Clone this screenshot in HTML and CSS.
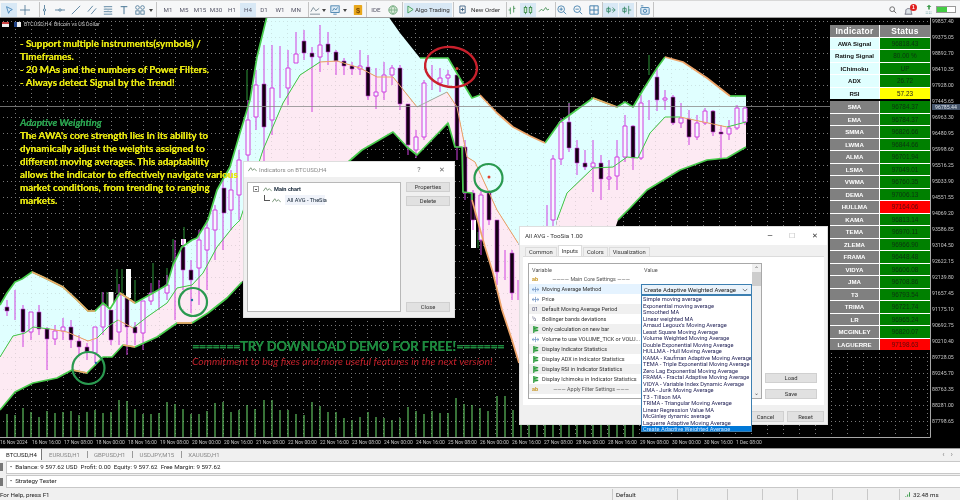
FILE: index.html
```html
<!DOCTYPE html>
<html lang="en">
<head>
<meta charset="utf-8">
<title>MetaTrader 5 - BTCUSD,H4</title>
<link rel="stylesheet" href="styles.css">
</head>
<body>
<svg class="defs" width="0" height="0" aria-hidden="true">
  <symbol id="flag" viewBox="0 0 8 8"><path d="M2 0V8M2 1L7 2L2 3M2 4L7 5L2 6" fill="none" stroke="#2a9a3a" stroke-width="1.3"/></symbol>
  <symbol id="arrows" viewBox="0 0 8 8"><path d="M0 4H8M4 1V7M2 2.5L0 4L2 5.5M6 2.5L8 4L6 5.5" fill="none" stroke="#7a9cc8" stroke-width=".9"/></symbol>
  <symbol id="wave" viewBox="0 0 10 8"><path d="M0 6L3 2L5 5L7 3L10 6" fill="none" stroke="#6b8a6b" stroke-width="1"/></symbol>
</svg>
<div class="screen">
  <header class="toolbar">
    <span class="tool active"><svg viewBox="0 0 12 12"><path d="M3 2L10 5.5L7 7L5.5 10Z" fill="none" stroke="#3f7fb5"/></svg></span>
    <span class="tool"><svg viewBox="0 0 12 12"><path d="M6 0V12M0 6H12" stroke="#4a7796" fill="none"/></svg></span>
    <span class="sep sep-a"></span>
    <span class="tool tool-9"><svg viewBox="0 0 8 12"><path d="M4 0V12" stroke="#4a7796"/><circle cx="4" cy="6" r="1.4" fill="#e8f0f5" stroke="#4a7796"/></svg></span>
    <span class="tool"><svg viewBox="0 0 12 12"><path d="M0 6H12" stroke="#4a7796"/><circle cx="6" cy="6" r="1.4" fill="#e8f0f5" stroke="#4a7796"/></svg></span>
    <span class="tool"><svg viewBox="0 0 12 12"><path d="M1 11L11 1" stroke="#4a7796"/></svg></span>
    <span class="tool"><svg viewBox="0 0 12 12"><path d="M1 8L7 1M5 11L11 4" stroke="#4a7796"/></svg></span>
    <span class="tool"><svg viewBox="0 0 12 12"><path d="M1 2H11M1 5H11M1 8H11M1 11H11" stroke="#4a7796"/><path d="M1 2L11 11" stroke="#9cb7c9" stroke-width=".6"/></svg></span>
    <span class="tool"><svg viewBox="0 0 12 12"><path d="M2 2H10M6 2V11" stroke="#4a7796" stroke-width="1.2"/></svg></span>
    <span class="tool"><svg viewBox="0 0 12 12"><circle cx="3" cy="3" r="2.2" fill="none" stroke="#4a7796"/><circle cx="9" cy="3" r="2.2" fill="none" stroke="#4a7796"/><rect x="1" y="7" width="4" height="4" fill="none" stroke="#4a7796"/><rect x="7" y="7" width="4" height="4" fill="none" stroke="#4a7796"/></svg></span>
    <span class="caret"></span>
    <span class="sep sep-b"></span>
    <span class="period">M1</span><span class="period">M5</span><span class="period">M15</span><span class="period">M30</span><span class="period">H1</span><span class="period active">H4</span><span class="period">D1</span><span class="period">W1</span><span class="period">MN</span>
    <span class="sep sep-c"></span>
    <span class="tool tool-12"><svg viewBox="0 0 12 12"><path d="M0 11H12M1 8L4 3L7 7L11 4" fill="none" stroke="#6d7f8a"/></svg></span>
    <span class="caret"></span>
    <span class="tool tool-14"><svg viewBox="0 0 12 12"><rect x="1" y="1" width="10" height="8" fill="#dceaf5" stroke="#3a7aa8"/><path d="M3 7L5 4L7 6L9 3" fill="none" stroke="#3a7aa8"/><path d="M4 11H8" stroke="#3a7aa8"/></svg></span>
    <span class="caret"></span>
    <span class="tool tool-14 gap-l2"><svg viewBox="0 0 12 12"><rect x="1" y="0" width="10" height="12" rx="1" fill="#e8a71c"/><text x="6" y="9" class="coin">$</text></svg></span>
    <span class="sep"></span>
    <span class="period period-ide">IDE</span>
    <span class="tool"><svg viewBox="0 0 12 12"><circle cx="6" cy="6" r="5" fill="#d8ecd8" stroke="#5c9a6a"/><path d="M1 6H11M6 1C3 4 3 8 6 11C9 8 9 4 6 1" fill="none" stroke="#5c9a6a" stroke-width=".7"/></svg></span>
    <span class="sep sep-d"></span>
    <span class="btn btn-algo active"><svg viewBox="0 0 8 8"><path d="M1 0L7 4L1 8Z" fill="#d9efd9" stroke="#3a9a5a"/></svg>Algo Trading</span>
    <span class="sep sep-d"></span>
    <span class="btn btn-new"><svg viewBox="0 0 8 10"><path d="M1 1H7V9H1Z" fill="none" stroke="#3a5f80"/><path d="M4 3V7M2 5H6" stroke="#3a5f80"/></svg>New Order</span>
    <span class="sep sep-e"></span>
    <span class="tool tool-10"><svg viewBox="0 0 10 12"><path d="M3 3V11M1 6H3M7 1V9M7 4H9" stroke="#3a8a4a" fill="none"/></svg></span>
    <span class="tool gap-l3 active"><svg viewBox="0 0 12 12"><path d="M3 1V11M9 1V11" stroke="#3a8a4a"/><rect x="1.5" y="3" width="3" height="6" fill="#d5ecd5" stroke="#3a8a4a"/><rect x="7.5" y="3" width="3" height="6" fill="#d5ecd5" stroke="#3a8a4a"/></svg></span>
    <span class="tool"><svg viewBox="0 0 12 12"><path d="M0 8L3 5L5 7L8 3L10 6L12 5" fill="none" stroke="#3a8a4a"/></svg></span>
    <span class="sep sep-h"></span>
    <span class="tool tool-12"><svg viewBox="0 0 12 12"><circle cx="5" cy="5" r="4" fill="none" stroke="#3a7aa8"/><path d="M8 8L11 11M3 5H7M5 3V7" stroke="#3a7aa8"/></svg></span>
    <span class="tool gap-l2"><svg viewBox="0 0 12 12"><circle cx="5" cy="5" r="4" fill="none" stroke="#3a7aa8"/><path d="M8 8L11 11M3 5H7" stroke="#3a7aa8"/></svg></span>
    <span class="tool"><svg viewBox="0 0 12 12"><path d="M1 1H11V11H1ZM6 1V11M1 6H11" fill="none" stroke="#3a7aa8" stroke-width="1.1"/></svg></span>
    <span class="sep sep-f"></span>
    <span class="tool tool-15 active"><svg viewBox="0 0 12 12"><path d="M3 2V10M1 4H5V8H1ZM8 3L11 6L8 9M7 6H11" fill="none" stroke="#3a8a6a"/></svg></span>
    <span class="tool tool-15 gap-l1 active"><svg viewBox="0 0 12 12"><path d="M3 2V10M1 4H5V8H1ZM8 1V11M8 6H11" fill="none" stroke="#3a8a6a"/></svg></span>
    <span class="sep sep-g"></span>
    <span class="tool"><svg viewBox="0 0 12 12"><rect x="1" y="3" width="10" height="8" rx="1" fill="#dceaf5" stroke="#3a7aa8"/><circle cx="6" cy="7" r="2" fill="none" stroke="#3a7aa8"/><path d="M1 1H4" stroke="#3a7aa8"/></svg></span>
    <span class="sep sep-i"></span>
    <div class="tray">
      <svg class="tray-search" viewBox="0 0 10 10"><circle cx="4" cy="4" r="3" fill="none" stroke="#555"/><path d="M6 6L9 9" stroke="#555"/></svg>
      <span class="bell"><svg viewBox="0 0 10 10"><path d="M1 8C2 7 2 5 2 4C2 1 8 1 8 4C8 5 8 7 9 8Z" fill="#dde3e8" stroke="#667"/></svg><b class="badge">1</b></span>
      <svg class="tray-signal" viewBox="0 0 10 12"><path d="M5 0L8 3H6V6H4V3H2Z" fill="#3c9a4a"/><path d="M1 9H9M1 11H9" stroke="#7aa" stroke-dasharray="1 1"/></svg>
      <span class="battery"><i class="battery-fill"></i></span>
    </div>
  </header>

  <main class="chart">
    <svg class="plot" viewBox="0 18 960 430" width="960" height="430" role="img" aria-label="BTCUSD H4 candlestick chart">
      <defs>
        <pattern id="grid" x="15" y="5" width="16" height="16" patternUnits="userSpaceOnUse">
          <path d="M0 .5H1M4 .5H5M8 .5H9M12 .5H13M.5 0V1M.5 4V5M.5 8V9M.5 12V13" stroke="#787878" stroke-width="1"/>
        </pattern>
      </defs>
      <rect class="bg" x="0" y="18" width="960" height="430"/>
      <rect x="0" y="18" width="930" height="419" fill="url(#grid)"/>
      <polygon class="band-up" points="0,305 7,293 15,282 22,279 32,272 43,277 63,287 77,300 88,311 95,311 103,303 110,309 120,293 135,303 153,293 167,285 173,265 182,247 192,240 197,238 208,220 217,190 230,167 240,133 250,100 257,57 267,16 388,16 400,33 420,58 448,58 458,75 472,98 480,95 497,113 513,127 530,136 545,143 560,122 593,98 617,107 625,102 633,107 643,90 657,68 665,57 683,62 707,78 730,96 746,96 746,122 727,127 680,117 665,117 650,133 638,158 627,157 613,167 593,168 567,193 557,220 550,260 535,280 518,243 497,210 475,162 467,157 457,107 447,92 417,107 393,77 377,77 360,68 337,61 320,62 300,75 283,103 263,150 240,220 233,227 217,247 203,273 192,285 177,288 167,303 147,317 133,328 118,320 110,325 97,338 88,341 67,332 50,329 33,327 25,333 13,336 0,357"/>
      <polygon class="band-down" points="0,357 13,336 25,333 33,327 50,329 67,332 88,341 97,338 110,325 118,320 133,328 147,317 167,303 177,288 192,285 203,273 217,247 233,227 240,220 263,150 283,103 300,75 320,62 337,61 360,68 377,77 393,77 417,107 447,92 457,107 467,157 475,162 497,210 518,243 535,280 550,260 557,220 567,193 593,168 613,167 627,157 638,158 650,133 665,117 680,117 727,127 746,122 746,147 727,158 707,160 680,170 647,190 630,208 618,220 590,300 530,390 519,363 512,340 502,310 493,273 485,247 472,200 472,193 463,192 462,147 455,147 448,123 417,155 407,147 393,132 362,150 347,163 300,200 270,240 242,282 227,298 208,313 192,323 177,323 157,337 135,347 123,345 112,357 103,357 87,373 72,370 57,378 33,383 15,392 0,410"/>
      <rect x="0" y="18" width="930" height="419" fill="url(#grid)" opacity=".2"/>

      <path class="spike" d="M102 292V310M107 292V305M117 269V293M122 269V295M135 280V303M153 263V293M167 268V285M173 239V265M184 227V239M247 70V100M472 220V248M478 232V248M649 55V75M569 102V120"/>
      <path class="white-bar" d="M111 292V310M128.500 269V298M183.500 239V245M473.500 220V248"/>

      <path class="wick" d="M7 300V316M15 290V320M23 305V347M31 312V340M39 305V335M47 327V370M55 325V345M63 318V340M71 320V348M79 335V355M87 343V360M95 327V363M103 292V335M111 310V345M119 284V345M127 298V355M135 322V345M143 301V350M151 283V305M159 280V310M167 275V300M175 240V320M183 239V290M191 260V313M199 230V305M207 220V290M215 205V260M223 180V250M231 170V230M239 150V220M248 100V170M256 70V130M264 45V165M272 45V135M280 46V98M288 50V105M296 32V63M304 30V60M312 47V112M320 25V72M328 32V65M336 50V75M344 58V75M352 62V75M360 50V75M368 55V100M376 68V109M384 62V100M392 65V85M400 65V110M408 104V155M416 130V158M424 80V140M432 65V90M440 68V92M448 70V85M457 75V160M465 140V200M473 190V230M481 190V255M489 190V225M497 220V285M505 250V280M512 250V300M518 280V300M547 205V227M553 155V230M561 118V165M569 103V152M577 140V175M585 150V170M593 140V192M601 155V200M609 160V190M617 140V190M625 115V162M633 125V170M641 95V160M649 100V120M657 68V111M665 90V110M673 95V125M681 103V128M689 110V145M697 115V140M705 108V125M713 110V136M721 125V158M729 120V140M737 105V130M745 107V125"/>
      <path class="body-w" d="M29 312h4v20h-4zM53 331h4v8h-4zM61 327h4v4h-4zM93 327h4v26h-4zM101 305h4v22h-4zM117 295h4v37h-4zM141 301h4v32h-4zM149 293h4v8h-4zM165 285h4v8h-4zM197 240h4v28h-4zM205 228h4v22h-4zM213 210h4v20h-4zM229 190h4v20h-4zM237 160h4v35h-4zM246 120h4v35h-4zM254 85h4v32h-4zM270 88h4v32h-4zM286 68h4v20h-4zM294 54h4v9h-4zM318 45h4v12h-4zM358 66h4v3h-4zM374 92h4v4h-4zM382 75h4v17h-4zM390 68h4v7h-4zM414 137h4v13h-4zM422 83h4v54h-4zM438 78h4v5h-4zM446 75h4v3h-4zM479 195h4v45h-4zM551 159h4v61h-4zM559 122h4v37h-4zM591 163h4v4h-4zM607 177h4v2h-4zM615 157h4v19h-4zM623 126h4v31h-4zM639 103h4v55h-4zM663 98h4v2h-4zM679 118h4v5h-4zM695 123h4v14h-4zM703 111h4v12h-4zM727 128h4v6h-4zM735 108h4v20h-4zM743 108h4v14h-4z"/>
      <path class="body-b" d="M5 307h4v4h-4zM21 309h4v23h-4zM37 312h4v17h-4zM45 329h4v10h-4zM69 327h4v13h-4zM77 341h4v6h-4zM85 347h4v5h-4zM109 310h4v30h-4zM125 298h4v29h-4zM133 327h4v6h-4zM181 247h4v23h-4zM189 270h4v10h-4zM222 188h4v25h-4zM262 84h4v43h-4zM302 41h4v12h-4zM310 53h4v4h-4zM326 44h4v8h-4zM334 52h4v9h-4zM342 61h4v5h-4zM350 66h4v3h-4zM366 67h4v29h-4zM398 68h4v36h-4zM406 104h4v41h-4zM455 75h4v72h-4zM463 147h4v46h-4zM471 193h4v27h-4zM487 193h4v27h-4zM495 220h4v52h-4zM510 253h4v40h-4zM567 122h4v26h-4zM575 148h4v15h-4zM583 163h4v4h-4zM599 163h4v16h-4zM631 126h4v32h-4zM655 77h4v23h-4zM671 97h4v26h-4zM687 119h4v18h-4zM711 111h4v21h-4zM719 132h4v2h-4z"/>

      <polyline class="edge green" points="0,305 7,293 15,282 22,279 32,272 43,277 63,287 77,300 88,311 95,311 103,303 110,309 120,293 135,303 153,293 167,285 173,265 182,247 192,240 197,238 208,220 217,190 230,167 240,133 250,100 257,57 267,16"/>
      <polyline class="edge green" points="420,58 448,58 458,75 472,98 480,95"/>
      <polyline class="edge green" points="545,143 560,122 593,98 617,107 625,102 633,107 643,90 657,68 665,57"/>
      <polyline class="edge green" points="730,96 746,96"/>
      <polyline class="edge orange" points="32,272 43,277 63,287 77,300 88,311 95,311"/>
      <polyline class="edge orange" points="120,293 135,303"/>
      <polyline class="edge orange" points="480,95 497,113 513,127 530,136 545,143"/>
      <polyline class="edge orange" points="593,98 617,107"/>
      <polyline class="edge orange" points="665,57 683,62 707,78 730,96"/>
      <polyline class="edge green" points="0,410 15,392 33,383 57,378 72,370 87,373 103,357 112,357 123,345 135,347 157,337 177,323 192,323 208,313 227,298 242,282"/>
      <polyline class="edge green" points="347,163 362,150 393,132 407,147 417,155 448,123 455,147 462,147 463,192 472,193 472,200"/>
      <polyline class="edge green" points="618,220 630,208 647,190 680,170 707,160 727,158 746,147"/>
      <polyline class="edge orange" points="472,200 485,247 493,273 502,310 512,340 519,363"/>
      <polyline class="edge orange" points="72,370 87,373"/>
      <polyline class="edge orange" points="123,345 135,347"/>
      <polyline class="edge orange" points="177,323 192,323"/>
      <polyline class="mid green" points="0,357 13,336 25,333 33,327 50,329"/>
      <polyline class="mid orange" points="50,329 67,332 88,341 97,338"/>
      <polyline class="mid green" points="97,338 110,325 118,320"/>
      <polyline class="mid orange" points="118,320 133,328"/>
      <polyline class="mid green" points="133,328 147,317 167,303 177,288 192,285 203,273 217,247 233,227 240,220 263,150 283,103 300,75 320,62"/>
      <polyline class="mid orange" points="320,62 337,61 360,68 377,77 393,77 417,107"/>
      <polyline class="mid muted" points="417,107 447,92"/>
      <polyline class="mid orange" points="447,92 457,107 467,157 475,162 497,210 518,243"/>
      <polyline class="mid green" points="557,220 567,193 593,168 613,167 627,157 638,158 650,133 665,117 680,117"/>
      <polyline class="mid orange" points="680,117 727,127"/>
      <polyline class="mid green" points="727,127 746,122"/>

      <path class="price-line" d="M0 106.500H930"/>
      <path class="volume" d="M7 414V437M15 415V437M23 408V437M31 412V437M39 417V437M47 411V437M55 413V437M63 412V437M71 411V437M79 415V437M87 412V437M95 410V437M103 413V437M111 412V437M119 400V437M127 401V437M135 409V437M143 414V437M151 414V437M159 413V437M167 402V437M175 404V437M183 409V437M191 414V437M199 414V437M207 411V437M215 403V437M223 402V437M231 412V437M239 410V437M247 405V437M255 409V437M264 400V437M272 400V437M280 410V437M288 410V437M296 414V437M304 415V437M312 402V437M320 406V437M328 412V437M336 412V437M344 418V437M352 420V437M360 417V437M368 412V437M376 417V437M384 418V437M392 420V437M400 418V437M408 407V437M416 411V437M424 414V437M432 411V437M440 413V437M448 413V437M456 398V437M464 404V437M472 405V437M480 408V437M488 411V437M497 396V437M505 396V437M513 410V437M521 420V437M529 420V437M537 420V437M545 420V437M553 420V437M561 420V437M569 420V437M577 420V437M585 420V437M593 420V437M601 420V437M609 420V437M617 420V437M625 420V437M633 420V437"/>
      <path class="frame" d="M0 437.500H930.500V18"/>

      <ellipse class="ring-red" cx="451" cy="67" rx="26" ry="20" transform="rotate(8 451 67)"/>
      <circle class="ring-green" cx="488.500" cy="178" r="14"/>
      <circle class="ring-green" cx="88.500" cy="368" r="16"/>
      <circle class="ring-green" cx="193" cy="302" r="14"/>
      <circle class="dot-red" cx="457" cy="68.500" r="1.500"/>
      <circle class="dot-red" cx="489" cy="177" r="1.500"/>
      <circle class="dot-blue" cx="96" cy="363" r="1.200"/>
      <circle class="dot-blue" cx="192" cy="300" r="1.200"/>
    </svg>

    <div class="chart-title">
      <span class="flag flag-a"></span><span class="flag flag-b"></span>
      <span>BTCUSD,H4: Bitcoin vs US Dollar</span>
    </div>

    <div class="promo">
      <p class="promo-line">- Support multiple instruments(symbols) /</p>
      <p class="promo-line">Timeframes.</p>
      <p class="promo-line">- 20 MAs and the numbers of Power Filters.</p>
      <p class="promo-line">- Always detect Signal by the Trend!</p>
      <p class="promo-head">Adaptive Weighting</p>
      <p class="promo-line">The AWA's core strength lies in its ability to</p>
      <p class="promo-line">dynamically adjust the weights assigned to</p>
      <p class="promo-line">different moving averages. This adaptability</p>
      <p class="promo-line">allows the indicator to effectively navigate various</p>
      <p class="promo-line">market conditions, from trending to ranging</p>
      <p class="promo-line">markets.</p>
    </div>

    <div class="cta">
      <p class="cta-main"><span class="eq">=======</span>TRY DOWNLOAD DEMO FOR FREE!<span class="eq">=======</span></p>
      <p class="cta-sub">Commitment to bug fixes and more useful features in the next version!</p>
    </div>

    <div class="stats">
      <div class="stats-grid">
        <div class="cell head">Indicator</div><div class="cell head">Status</div>
        <div class="cell light">AWA Signal</div><div class="cell ok">96818.43</div>
        <div class="cell light">Rating Signal</div><div class="cell ok">80.00 %</div>
        <div class="cell light">IChimoku</div><div class="cell ok">UP</div>
        <div class="cell light">ADX</div><div class="cell ok">26.72</div>
        <div class="cell light">RSI</div><div class="cell warn">57.23</div>
      </div>
      <div class="stats-grid">
        <div class="cell name">SMA</div><div class="cell ok">96784.37</div>
        <div class="cell name">EMA</div><div class="cell ok">96784.37</div>
        <div class="cell name">SMMA</div><div class="cell ok">96826.66</div>
        <div class="cell name">LWMA</div><div class="cell ok">96844.66</div>
        <div class="cell name">ALMA</div><div class="cell ok">96701.94</div>
        <div class="cell name">LSMA</div><div class="cell ok">97049.01</div>
        <div class="cell name">VWMA</div><div class="cell ok">96760.35</div>
        <div class="cell name">DEMA</div><div class="cell ok">97006.13</div>
        <div class="cell name">HULLMA</div><div class="cell bad">97164.06</div>
        <div class="cell name">KAMA</div><div class="cell ok">96813.14</div>
        <div class="cell name">TEMA</div><div class="cell ok">96970.11</div>
        <div class="cell name">ZLEMA</div><div class="cell ok">96966.90</div>
        <div class="cell name">FRAMA</div><div class="cell ok">96448.48</div>
        <div class="cell name">VIDYA</div><div class="cell ok">96606.08</div>
        <div class="cell name">JMA</div><div class="cell ok">96708.86</div>
        <div class="cell name">T3</div><div class="cell ok">96793.54</div>
        <div class="cell name">TRIMA</div><div class="cell ok">96721.74</div>
        <div class="cell name">LR</div><div class="cell ok">96965.24</div>
        <div class="cell name">MCGINLEY</div><div class="cell ok">96820.07</div>
        <div class="cell name">LAGUERRE</div><div class="cell bad">97198.63</div>
      </div>
    </div>

    <div class="price-axis">
      <span>99857.40</span><span>99375.05</span><span>98892.70</span><span>98410.35</span><span>97928.00</span><span>97445.65</span><span>96963.30</span><span>96480.95</span><span>95998.60</span><span>95516.25</span><span>95033.90</span><span>94551.55</span><span>94069.20</span><span>93586.85</span><span>93104.50</span><span>92622.15</span><span>92139.80</span><span>91657.45</span><span>91175.10</span><span>90692.75</span><span>90210.40</span><span>89728.05</span><span>89245.70</span><span>88763.35</span><span>88281.00</span><span>87798.65</span>
    </div>
    <div class="price-tag">96785.44</div>

    <div class="time-axis">
      <span>16 Nov 2024</span><span>16 Nov 16:00</span><span>17 Nov 08:00</span><span>18 Nov 00:00</span><span>18 Nov 16:00</span><span>19 Nov 08:00</span><span>20 Nov 00:00</span><span>20 Nov 16:00</span><span>21 Nov 08:00</span><span>22 Nov 00:00</span><span>22 Nov 16:00</span><span>23 Nov 08:00</span><span>24 Nov 00:00</span><span>24 Nov 16:00</span><span>25 Nov 08:00</span><span>26 Nov 00:00</span><span>26 Nov 16:00</span><span>27 Nov 08:00</span><span>28 Nov 00:00</span><span>28 Nov 16:00</span><span>29 Nov 08:00</span><span>30 Nov 00:00</span><span>30 Nov 16:00</span><span>1 Dec 08:00</span>
    </div>

    <section class="win win-list">
      <div class="win-title"><svg class="ico-10" viewBox="0 0 10 8"><use href="#wave"/></svg><span class="win-caption">Indicators on BTCUSD,H4</span><span class="win-ctl win-help">?</span><span class="win-ctl">✕</span></div>
      <div class="list-body">
        <div class="tree">
          <div class="tree-row"><span class="tree-box"></span><svg class="ico-10" viewBox="0 0 10 8"><use href="#wave"/></svg><b>Main chart</b></div>
          <div class="tree-row tree-child"><span class="tree-elbow"></span><svg class="ico-10" viewBox="0 0 10 8"><use href="#wave"/></svg><span class="tree-sel">All AVG - TheSia</span></div>
        </div>
        <div class="list-actions">
          <span class="push">Properties</span>
          <span class="push">Delete</span>
          <span class="push push-end">Close</span>
        </div>
      </div>
    </section>

    <section class="win win-props">
      <div class="win-title win-title-dark"><span class="win-caption">All AVG - TooSia 1.00</span><span class="win-ctl ctl-min">—</span><span class="win-ctl ctl-max">☐</span><span class="win-ctl ctl-close">✕</span></div>
      <div class="tabs"><span class="tab">Common</span><span class="tab tab-on">Inputs</span><span class="tab">Colors</span><span class="tab">Visualization</span></div>
      <div class="props-body">
        <div class="params">
          <div class="param-grid">
            <div class="p p-head">Variable</div><div class="p p-head">Value</div>
            <div class="p"><span class="ab">ab</span><span class="p-mid">———— Main Core Settings ———</span></div><div class="p"></div>
            <div class="p p-alt p-hot"><svg class="ico-7"><use href="#arrows"/></svg>Moving Average Method</div><div class="p p-alt"></div>
            <div class="p"><svg class="ico-7"><use href="#arrows"/></svg>Price</div><div class="p"></div>
            <div class="p p-alt"><span class="num">01</span>Default Moving Average Period</div><div class="p p-alt"></div>
            <div class="p"><span class="num">½</span>Bollinger bands deviations</div><div class="p"></div>
            <div class="p p-alt"><svg class="ico-7"><use href="#flag"/></svg>Only calculation on new bar</div><div class="p p-alt"></div>
            <div class="p"><svg class="ico-7"><use href="#arrows"/></svg>Volume to use VOLUME_TICK or VOLU...</div><div class="p"></div>
            <div class="p p-alt"><svg class="ico-7"><use href="#flag"/></svg>Display Indicator Statistics</div><div class="p p-alt"></div>
            <div class="p"><svg class="ico-7"><use href="#flag"/></svg>Display ADX in Indicator Statistics</div><div class="p"></div>
            <div class="p p-alt"><svg class="ico-7"><use href="#flag"/></svg>Display RSI in Indicator Statistics</div><div class="p p-alt"></div>
            <div class="p"><svg class="ico-7"><use href="#flag"/></svg>Display Ichimoku in Indicator Statistics</div><div class="p"></div>
            <div class="p p-alt"><span class="ab">ab</span><span class="p-mid">——— Apply Filter Settings ———</span></div><div class="p p-alt"></div>
          </div>
          <div class="vscroll"><span class="vs-up">⌃</span><i class="vs-thumb"></i><span class="vs-down">⌄</span></div>
        </div>
        <div class="side-actions"><span class="push">Load</span><span class="push">Save</span></div>
      </div>
      <div class="props-foot"><span class="push">Cancel</span><span class="push">Reset</span></div>

      <div class="combo">Create Adaptive Weighted Average<svg viewBox="0 0 8 5"><path d="M1 1L4 4L7 1" fill="none" stroke="#555"/></svg></div>
      <ul class="drop">
        <li>Simple moving average</li>
        <li>Exponential moving average</li>
        <li>Smoothed MA</li>
        <li>Linear weighted MA</li>
        <li>Arnaud Legoux's Moving Average</li>
        <li>Least Square Moving Average</li>
        <li>Volume Weighted Moving Average</li>
        <li>Double Exponential Moving Average</li>
        <li>HULLMA - Hull Moving Average</li>
        <li>KAMA - Kaufman Adaptive Moving Average</li>
        <li>TEMA - Triple Exponential Moving Average</li>
        <li>Zero Lag Exponential Moving Average</li>
        <li>FRAMA - Fractal Adaptive Moving Average</li>
        <li>VIDYA - Variable Index Dynamic Average</li>
        <li>JMA - Jurik Moving Average</li>
        <li>T3 - Tillson MA</li>
        <li>TRIMA - Triangular Moving Average</li>
        <li>Linear Regression Value MA</li>
        <li>McGinley dynamic average</li>
        <li>Laguerre Adaptive Moving Average</li>
        <li class="drop-on">Create Adaptive Weighted Average</li>
      </ul>
    </section>
  </main>

  <nav class="chart-tabs">
    <span class="ctab ctab-on">BTCUSD,H4</span>
    <span class="ctab">EURUSD,H1</span><span class="ctab ctab-bar">GBPUSD,H1</span><span class="ctab ctab-bar">USDJPY,M15</span><span class="ctab ctab-bar">XAUUSD,H1</span>
    <span class="arrows">‹&nbsp;&nbsp;&nbsp;›</span>
  </nav>
  <div class="panel"><span class="panel-grip"></span><div class="panel-box">•&nbsp;&nbsp;Balance: 9 597.62 USD&nbsp;&nbsp;Profit: 0.00&nbsp;&nbsp;Equity: 9 597.62&nbsp;&nbsp;Free Margin: 9 597.62</div></div>
  <div class="panel"><span class="panel-grip"></span><div class="panel-box">•&nbsp;&nbsp;Strategy Tester</div></div>
  <footer class="status">
    <span class="st st-help">For Help, press F1</span>
    <span class="st st-default">Default</span>
    <span class="st st-a"></span><span class="st st-b"></span><span class="st st-c"></span><span class="st st-c"></span><span class="st st-c"></span><span class="st st-d"></span>
    <span class="st st-ping"><svg viewBox="0 0 8 8"><path d="M1 7V6M3.500 7V4M6 7V1" stroke="#3c9a4a" stroke-width="1.300"/></svg>32.48 ms</span>
  </footer>
</div>
</body>
</html>
```

FILE: styles.css
```css
* { box-sizing: border-box; }
html, body { margin: 0; padding: 0; background: #000; }
p, ul { margin: 0; padding: 0; }
.defs { position: absolute; }
.screen {
  width: 960px; height: 500px; overflow: hidden;
  display: flex; flex-direction: column;
  font-family: "Roboto", "Open Sans", sans-serif;
  background: #f0f0f0;
  filter: blur(.3px);
}

/* toolbar */
.toolbar {
  height: 18px; flex: none; display: flex; align-items: center;
  padding-left: 1px; padding-top: 1px;
  background: #f6f7f8; border-top: 1px solid #d8d8d8; border-bottom: 1px solid #a0a0a0;
}
.tool { width: 16px; height: 14px; flex: none; display: flex; align-items: center; justify-content: center; }
.tool svg { width: 10px; height: 10px; overflow: visible; }
.tool.active, .period.active, .btn.active { background: #d8e8f5; }
.tool-9 { width: 9px; margin-right: 3px; }
.tool-10 { width: 10px; }
.tool-12 { width: 12px; }
.tool-14 { width: 14px; }
.tool-15 { width: 15px; }
.gap-l1 { margin-left: 1px; }
.gap-l2 { margin-left: 2px; }
.gap-l3 { margin-left: 3px; }
.caret { width: 7px; height: 14px; flex: none; position: relative; }
.caret::after { content: ""; position: absolute; left: 1px; top: 6px; border: 2px solid transparent; border-top: 3px solid #444; }
.sep { width: 1px; height: 15px; flex: none; background: #c4c4c4; margin: 0 1px; }
.sep-a { margin: 0 0 0 6px; }
.sep-b { margin: 0 3px 0 1px; }
.sep-c { margin: 0 0 0 4px; }
.sep-d { margin: 0 1px; }
.sep-e { margin: 0; }
.sep-f { margin: 0; }
.sep-g { margin: 0 0 0 2px; }
.sep-h { margin: 0 0 0 3px; }
.sep-i { margin: 0; }
.period { width: 16px; height: 14px; flex: none; display: flex; align-items: center; justify-content: center; font-size: 6.2px; color: #556; }
.period-ide { width: 14px; margin-left: 1px; margin-right: 2px; }
.coin { font: bold 9px "Liberation Sans", sans-serif; text-anchor: middle; fill: #7a4a00; }
.btn { height: 14px; flex: none; display: flex; align-items: center; gap: 1px; padding: 0 0 0 3px; font-size: 6.2px; color: #333; white-space: nowrap; }
.btn svg { width: 7px; height: 9px; flex: none; }
.btn-algo { width: 48px; }
.btn-new { width: 51px; gap: 5px; padding-left: 4px; }
.tray { margin-left: auto; display: flex; align-items: center; padding-right: 4px; height: 14px; }
.tray-search { width: 8px; height: 8px; margin-right: 7px; }
.bell { width: 14px; height: 12px; position: relative; margin-right: 7px; display: block; }
.bell svg { width: 9px; height: 9px; position: absolute; left: 0; top: 3px; }
.badge { position: absolute; left: 6px; top: 0; width: 7px; height: 7px; border-radius: 50%; background: #e02020; color: #fff; font: bold 5px/7px "Liberation Sans", sans-serif; text-align: center; }
.tray-signal { width: 8px; height: 11px; margin-right: 3px; }
.battery { width: 20px; height: 7px; border: 1px solid #999; background: #fff; display: block; }
.battery-fill { display: block; width: 10px; height: 100%; background: #44cc44; }

/* chart */
.chart { position: relative; height: 430px; flex: none; background: #000; overflow: hidden; }
.plot { display: block; }
.bg { fill: #000; }
.band-up { fill: #e0ffff; }
.band-down { fill: #fdeaf3; }
.wick { stroke: #d040e0; stroke-width: 1; fill: none; }
.body-w { fill: #f4f8ff; stroke: #d040e0; stroke-width: 1; }
.body-b { fill: #140012; stroke: #d040e0; stroke-width: .6; }
.spike { stroke: #2f9a3a; stroke-width: 1; fill: none; }
.white-bar { stroke: #fff; stroke-width: 5; fill: none; }
.edge { fill: none; stroke-width: 1.7; stroke-linejoin: round; }
.mid { fill: none; stroke-width: 1; }
.green { stroke: #48cc4c; }
.orange { stroke: #efa56a; }
.muted { stroke: #a9b5a9; }
.price-line { stroke: #8c8c8c; stroke-width: .8; }
.volume { stroke: #66d066; stroke-width: 1.1; fill: none; }
.frame { stroke: #a8a8a8; stroke-width: 1; fill: none; }
.ring-red { fill: none; stroke: #c9202c; stroke-width: 2.4; }
.ring-green { fill: none; stroke: #2a9a50; stroke-width: 2.2; }
.dot-red { fill: #e04030; }
.dot-blue { fill: #1a6f9f; }

.chart-title { position: absolute; left: 2px; top: 3px; display: flex; align-items: center; gap: 1px; font-size: 5.3px; line-height: 7px; color: #c4c4c4; }
.flag { width: 7px; height: 5px; display: block; margin-right: 4px; }
.flag-a { background: linear-gradient(#c44 40%, #eee 40%); }
.flag-b { background: linear-gradient(90deg, #248 50%, #eee 50%); margin-right: 2px; }

.promo { position: absolute; left: 20px; top: 18.5px; width: 225px; font: bold 9.8px/13px "Lato", "Open Sans", sans-serif; color: #e6e610; text-shadow: 0 0 .5px #e6e610; }
.promo-line { white-space: nowrap; }
.promo-head { margin-top: 27px; font-style: italic; color: #2aa04e; text-shadow: 0 0 .5px #2aa04e; white-space: nowrap; }

.cta { position: absolute; left: 192px; top: 320px; white-space: nowrap; font-family: "Lato", "Open Sans", sans-serif; }
.cta-main { font-weight: 700; font-size: 13px; line-height: 16px; color: #1e8b3f; text-shadow: 0 0 .5px #1e8b3f; }
.eq { letter-spacing: -.7px; }
.cta-sub { font-style: italic; font-size: 10.4px; line-height: 14px; color: #c4202a; }

/* statistics table */
.stats { position: absolute; left: 830px; top: 7px; width: 100px; display: flex; flex-direction: column; gap: 2px; }
.stats-grid { display: grid; grid-template-columns: 49px 50px; grid-auto-rows: 11.5px; gap: 1px; background: #fff; }
.cell { display: flex; align-items: center; justify-content: center; font: bold 6.1px "Liberation Sans", sans-serif; white-space: nowrap; }
.head { background: #808080; color: #fff; font-size: 8.4px; letter-spacing: .3px; }
.light { background: #e0ffff; color: #111; }
.name { background: #808080; color: #fff; }
.ok { background: #008000; color: #0b3310; font-weight: 400; font-size: 6.4px; }
.warn { background: #ffff00; color: #222; font-weight: 400; font-size: 6.4px; }
.bad { background: #ff0000; color: #5a0a0a; font-weight: 400; font-size: 6.4px; }

.price-axis { position: absolute; right: 0; top: 0; width: 28px; display: flex; flex-direction: column; gap: 10px; font-size: 5.2px; line-height: 6px; color: #c8c8c8; }
.price-tag { position: absolute; left: 932px; top: 86px; width: 28px; height: 6px; background: #44546a; color: #dfe6ee; font-size: 5.2px; line-height: 6px; text-align: center; }
.time-axis { position: absolute; left: 0; top: 421px; display: flex; font-size: 4.9px; line-height: 7px; color: #c8c8c8; white-space: nowrap; }
.time-axis span { width: 32px; flex: none; }

/* dialogs */
.win { position: absolute; background: #f0f0f0; color: #222; font-size: 6px; box-shadow: 0 0 0 1px #dedede; }
.win-list { left: 244px; top: 144px; width: 210px; height: 155px; display: flex; flex-direction: column; }
.win-props { left: 520px; top: 209px; width: 307px; height: 197px; display: flex; flex-direction: column; }
.win-title { height: 15px; flex: none; display: flex; align-items: center; background: #fff; padding: 0 7px 0 4px; color: #888; }
.win-title-dark { height: 18px; color: #333; font-size: 6.2px; padding-left: 3px; }
.win-caption { margin-left: 2px; flex: 1; }
.win-ctl { width: 10px; text-align: center; color: #666; font-size: 7px; }
.win-help { margin-right: 13px; }
.ctl-min { margin-right: 12px; color: #222; }
.ctl-max { margin-right: 13px; color: #aaa; }
.ctl-close { margin-right: 0; color: #333; }
.ico-10 { width: 9px; height: 7px; flex: none; }
.ico-7 { width: 7px; height: 7px; flex: none; margin-right: 3px; }

.list-body { flex: 1; display: flex; gap: 5px; padding: 5px 3px 5px 3px; }
.tree { width: 154px; background: #fff; border: 1px solid #b8b8b8; padding: 1px 0 0 5px; }
.tree-row { display: flex; align-items: center; gap: 2px; height: 10px; font-size: 5.6px; color: #123; }
.tree-child { margin-left: 11px; margin-top: 1px; }
.tree-box { width: 6px; height: 6px; border: 1px solid #999; margin-right: 2px; position: relative; }
.tree-box::after { content: ""; position: absolute; left: 1px; top: 1.500px; width: 2px; height: 1px; background: #555; }
.tree-elbow { width: 6px; height: 6px; border-left: 1px solid #555; border-bottom: 1px solid #555; margin-top: -5px; }
.tree-sel { background: #f0f3fa; padding: 0 2px; line-height: 10px; margin-left: 2px; width: 40px; white-space: nowrap; }
.list-actions { flex: 1; display: flex; flex-direction: column; gap: 4px; }
.push { height: 10px; background: #e1e1e1; border: 1px solid #d0d0d0; display: flex; align-items: center; justify-content: center; font-size: 5.8px; color: #333; }
.list-actions .push { width: 44px; }
.push-end { margin-top: auto; }

.tabs { display: flex; align-items: flex-end; height: 11px; padding-left: 5px; gap: 1px; flex: none; }
.tab { height: 9px; padding: 0 3px; font-size: 5.8px; line-height: 9px; background: #f0f0f0; border: 1px solid #dcdcdc; border-bottom: none; color: #333; }
.tab-on { height: 11px; background: #fff; line-height: 10px; }
.props-body { height: 149px; margin: 0 3px 0 3px; background: #fff; display: flex; padding: 6px 0 0 5px; border-top: 1px solid #dcdcdc; flex: none; }
.params { width: 234px; height: 136px; border: 1px solid #a8a8a8; display: flex; flex: none; background: #fff; }
.param-grid { width: 223px; display: grid; grid-template-columns: 112px 111px; grid-auto-rows: 10px; align-content: start; overflow: hidden; }
.p { height: 10px; padding-left: 3px; display: flex; align-items: center; font-size: 5.5px; white-space: nowrap; color: #333; overflow: hidden; }
.p-head { height: 11px; color: #555; }
.p-alt { background: #f0f0f0; }
.p-hot { background: #e5f3ff; }
.p-mid { flex: 1; text-align: center; color: #555; font-size: 5.4px; }
.ab { color: #c89828; font-size: 5.5px; margin-right: 3px; font-weight: 700; }
.num { color: #557; font-size: 5.5px; margin-right: 3px; width: 7px; }
.vscroll { flex: 1; background: #f0f0f0; display: flex; flex-direction: column; align-items: center; font-size: 6px; color: #555; line-height: 6px; }
.vs-up { height: 8px; line-height: 10px; }
.vs-thumb { width: 100%; height: 14px; background: #cdcdcd; display: block; }
.vs-down { margin-top: auto; height: 8px; }
.side-actions { margin-left: 3px; margin-top: 110px; display: flex; flex-direction: column; gap: 6px; }
.side-actions .push { width: 52px; }
.props-foot { flex: 1; display: flex; justify-content: flex-end; gap: 3px; padding: 6px 3px 0 0; }
.props-foot .push { width: 37px; height: 11px; }
.combo { position: absolute; left: 121px; top: 57px; width: 111px; height: 11px; border: 1px solid #3c7fb1; background: #eaf3fb; display: flex; align-items: center; justify-content: space-between; padding: 0 3px 0 2px; font-size: 6px; color: #222; white-space: nowrap; }
.combo svg { width: 6px; height: 4px; }
.drop { position: absolute; left: 121px; top: 68px; width: 111px; height: 137px; list-style: none; background: #fff; border: 1px solid #3c7fb1; overflow: hidden; }
.drop li { height: 6.5px; line-height: 6.5px; font-size: 5.7px; padding-left: 1px; color: #26265a; white-space: nowrap; }
.drop .drop-on { height: 7.5px; line-height: 7.5px; background: #0078d7; color: #cfe6ff; }

/* lower bars */
.chart-tabs { height: 12px; flex: none; display: flex; align-items: center; background: #f0f0f0; border-top: 1px solid #9a9a9a; font-size: 6px; color: #888; position: relative; }
.ctab { height: 11px; line-height: 11px; padding: 0 7px 0 6px; white-space: nowrap; }
.ctab-on { background: #fff; color: #222; width: 42px; padding: 0 0 0 6px; border-right: 1px solid #777; margin-right: 1px; }
.ctab-bar { border-left: 1px solid #999; height: 7px; line-height: 7px; }
.arrows { margin-left: auto; padding-right: 7px; font-size: 8px; color: #888; }
.panel { height: 14.500px; flex: none; display: flex; align-items: center; background: #f0f0f0; }
.panel-grip { width: 3px; height: 8px; background: #777; margin-right: 3px; flex: none; }
.panel-box { flex: 1; height: 13px; background: #fff; border: 1px solid #c8c8c8; border-right: none; line-height: 11px; font-size: 6.2px; padding-left: 3px; color: #222; white-space: nowrap; }
.status { flex: 1; display: flex; align-items: center; background: #f0f0f0; font-size: 6.2px; color: #222; }
.st { height: 100%; display: flex; align-items: center; flex: none; border-left: 1px solid #c8c8c8; padding-left: 3px; }
.st-help { width: 612px; border-left: none; padding-left: 0; }
.st-default { width: 65px; }
.st-a { width: 50px; }
.st-b { width: 35px; }
.st-c { width: 35px; }
.st-d { width: 32px; }
.st-ping { flex: 1; gap: 2px; padding-left: 5px; }
.st-ping svg { width: 6px; height: 7px; }
```
